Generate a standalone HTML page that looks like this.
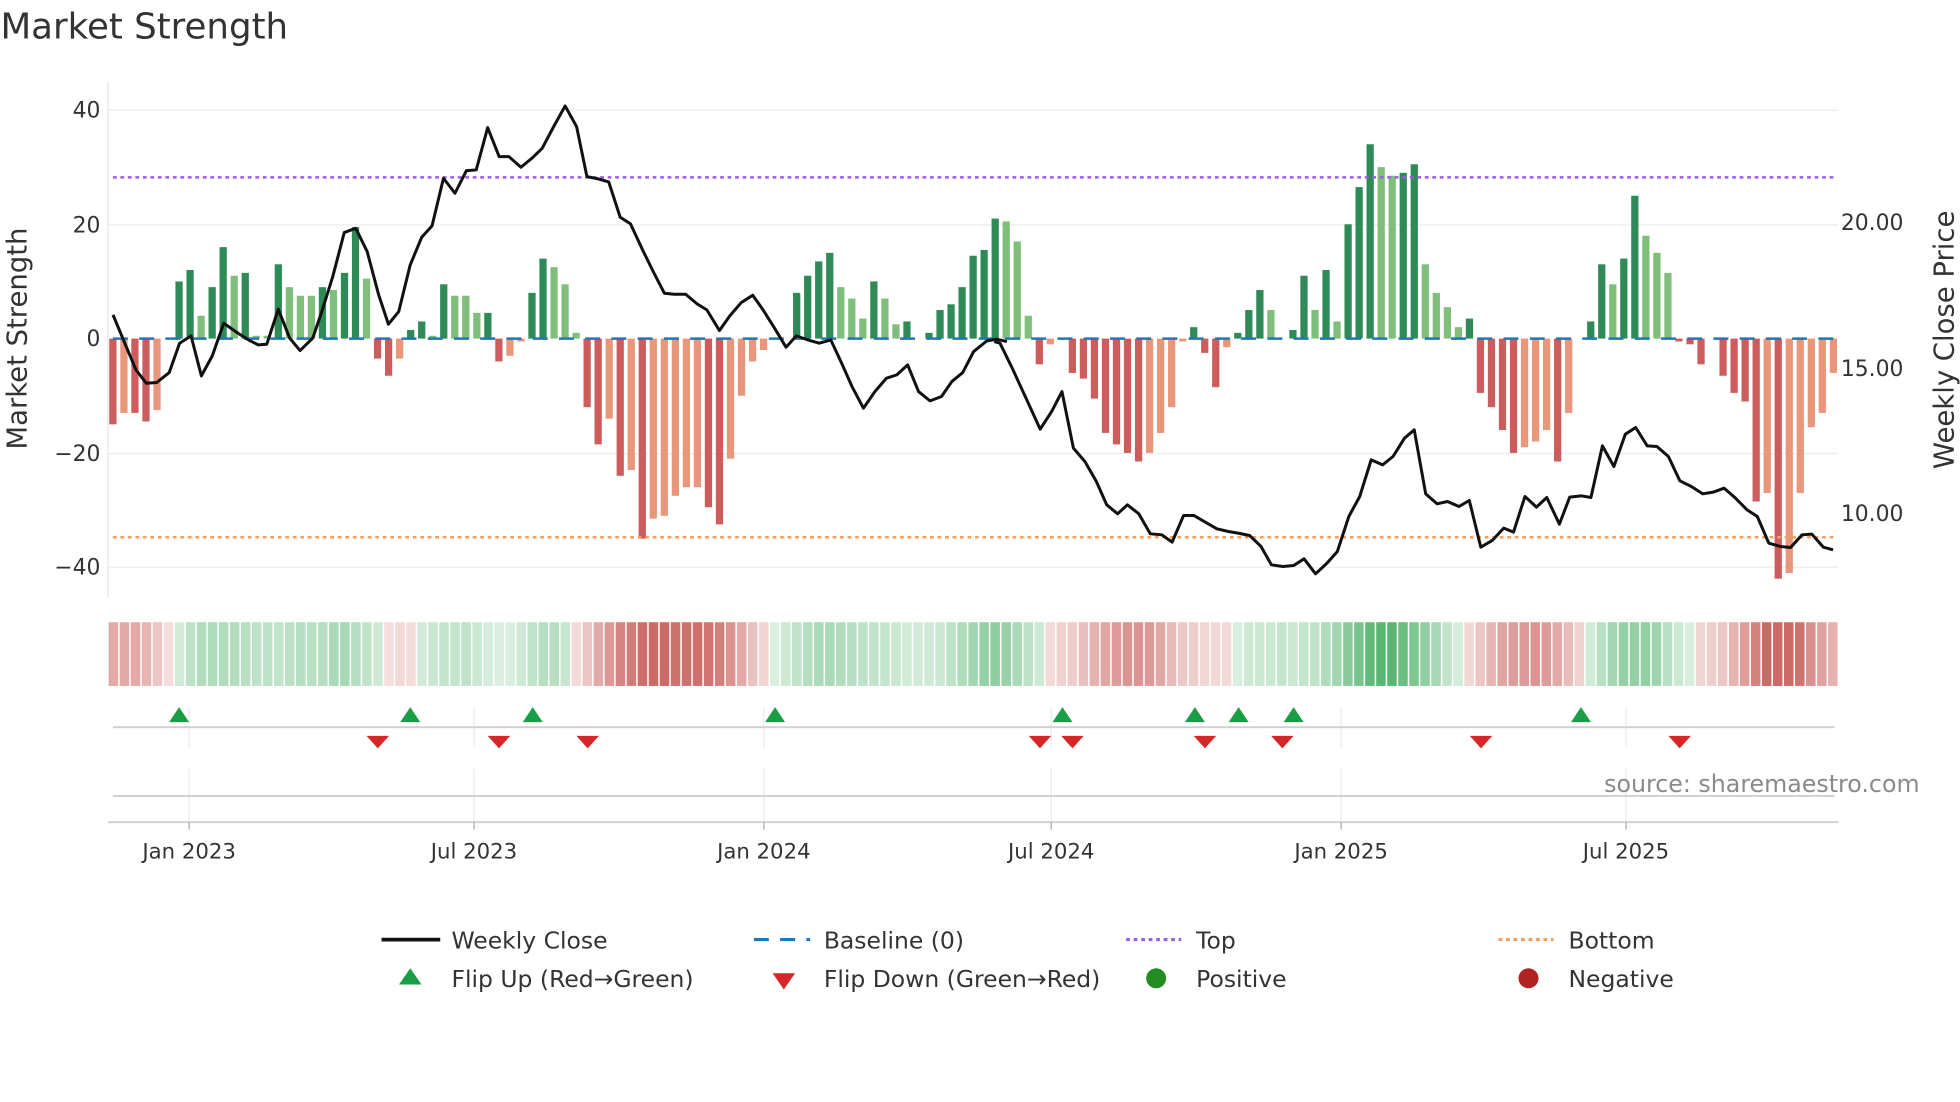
<!DOCTYPE html>
<html><head><meta charset="utf-8"><style>
html,body{margin:0;padding:0;background:#fff;width:1960px;height:1102px;overflow:hidden}
svg{display:block}
text{font-family:"DejaVu Sans","Liberation Sans",sans-serif;fill:#333}
</style></head><body>
<svg id="s" width="1960" height="1102" viewBox="0 0 1568 882" xmlns="http://www.w3.org/2000/svg">
<rect width="1568" height="882" fill="#fff"/>
<text x="0" y="31" font-size="28.5">Market Strength</text>
<g stroke="#ececf2" stroke-width="1">
<line x1="86" y1="88" x2="1471" y2="88"/><line x1="86" y1="180" x2="1471" y2="180"/>
<line x1="86" y1="363" x2="1471" y2="363"/><line x1="86" y1="454" x2="1471" y2="454"/>
</g>
<line x1="86" y1="65" x2="86" y2="478" stroke="#e6e6e6"/>
<g font-size="17.5" text-anchor="end">
<text x="80" y="94">40</text><text x="80" y="186">20</text><text x="80" y="277">0</text>
<text x="80" y="369">−20</text><text x="80" y="460">−40</text>
</g>
<g font-size="17.5">
<text x="1473" y="184">20.00</text><text x="1473" y="301">15.00</text><text x="1473" y="417">10.00</text>
</g>
<text transform="translate(21,271) rotate(-90)" font-size="22" text-anchor="middle">Market Strength</text>
<text transform="translate(1563,272) rotate(-90)" font-size="22" text-anchor="middle">Weekly Close Price</text>
<g id="bars"></g>
<line x1="90" y1="271" x2="1468" y2="271" stroke="#1f77b4" stroke-width="2" stroke-dasharray="12,9"/>
<line x1="90" y1="142" x2="1468" y2="142" stroke="#9b5fe0" stroke-width="2" stroke-dasharray="3,3"/>
<line x1="90" y1="430" x2="1468" y2="430" stroke="#f0a060" stroke-width="2" stroke-dasharray="3,3"/>
<polyline transform="translate(80,64) scale(0.4592,0.2667)" vector-effect="non-scaling-stroke" fill="none" stroke="#111" stroke-width="3" stroke-linejoin="round" points="22,705 45,800 62,870 80,910 98,908 120,878 138,790 158,768 176,888 195,828 215,730 240,760 258,780 275,795 290,793 310,688 330,775 348,812 370,775 385,700 405,590 425,458 445,445 465,515 485,645 502,733 520,695 540,555 560,472 578,438 598,295 618,340 638,272 655,270 675,143 695,230 712,230 733,262 752,235 770,205 790,140 810,78 830,140 848,290 868,297 886,306 906,412 924,432 945,510 965,580 983,640 1000,643 1020,643 1040,672 1057,690 1079,752 1097,708 1117,668 1137,646 1155,690 1175,745 1195,802 1213,768 1233,780 1253,790 1273,780 1292,850 1310,920 1330,985 1350,935 1370,895 1388,885 1407,855 1426,935 1446,963 1466,950 1484,905 1503,878 1522,815 1545,783 1562,778 1580,785"/>
<polyline transform="translate(800,64) scale(0.4592,0.2667)" vector-effect="non-scaling-stroke" fill="none" stroke="#111" stroke-width="3" stroke-linejoin="round" points="-10,785 0,790 20,860 48,965 70,1048 90,995 108,935 128,1105 148,1145 168,1205 186,1275 205,1302 222,1275 242,1302 262,1362 282,1365 300,1387 320,1307 338,1307 358,1327 378,1347 398,1355 415,1360 435,1367 455,1400 473,1455 493,1460 512,1457 530,1437 550,1482 570,1450 588,1415 608,1310 627,1250 647,1140 667,1155 685,1130 705,1075 722,1050 742,1242 762,1272 780,1265 800,1280 818,1262 838,1402 858,1382 878,1345 895,1357 915,1250 935,1282 953,1253 975,1333 993,1252 1013,1248 1030,1253 1050,1098 1070,1160 1090,1063 1108,1043 1128,1098 1145,1100 1165,1130 1185,1203 1205,1220 1225,1242 1243,1237 1262,1225 1282,1255 1302,1290 1320,1310 1340,1390 1360,1400 1378,1403 1398,1365 1415,1363 1435,1402 1452,1410"/>
<g id="strip"></g>
<g stroke="#e8eaee" stroke-width="1">
<line x1="151" y1="566" x2="151" y2="598"/><line x1="379" y1="566" x2="379" y2="598"/><line x1="611" y1="566" x2="611" y2="598"/><line x1="841" y1="566" x2="841" y2="598"/><line x1="1073" y1="566" x2="1073" y2="598"/><line x1="1301" y1="566" x2="1301" y2="598"/>
<line x1="151" y1="615" x2="151" y2="658"/><line x1="379" y1="615" x2="379" y2="658"/><line x1="611" y1="615" x2="611" y2="658"/><line x1="841" y1="615" x2="841" y2="658"/><line x1="1073" y1="615" x2="1073" y2="658"/><line x1="1301" y1="615" x2="1301" y2="658"/>
</g>
<line x1="90" y1="582" x2="1468" y2="582" stroke="#cfcfd4" stroke-width="1.5"/>
<line x1="90" y1="637" x2="1468" y2="637" stroke="#cfcfd4" stroke-width="1.5"/>
<line x1="86" y1="658" x2="1471" y2="658" stroke="#cfcfd4" stroke-width="1.5"/>
<g stroke="#aaa"><line x1="151" y1="658" x2="151" y2="664"/><line x1="379" y1="658" x2="379" y2="664"/><line x1="611" y1="658" x2="611" y2="664"/><line x1="841" y1="658" x2="841" y2="664"/><line x1="1073" y1="658" x2="1073" y2="664"/><line x1="1301" y1="658" x2="1301" y2="664"/></g>
<g id="mk"></g>
<text x="1536" y="634" font-size="19" style="fill:#8a8a8a" text-anchor="end">source: sharemaestro.com</text>
<g font-size="17" text-anchor="middle">
<text x="151" y="687">Jan 2023</text><text x="379" y="687">Jul 2023</text><text x="611" y="687">Jan 2024</text><text x="841" y="687">Jul 2024</text><text x="1073" y="687">Jan 2025</text><text x="1301" y="687">Jul 2025</text>
</g>
<g font-size="18.8">
<line x1="305" y1="752" x2="352" y2="752" stroke="#111" stroke-width="3"/><text x="361" y="759">Weekly Close</text>
<line x1="603" y1="752" x2="648" y2="752" stroke="#1f77b4" stroke-width="2.5" stroke-dasharray="12,9"/><text x="659" y="759">Baseline (0)</text>
<line x1="901" y1="752" x2="945" y2="752" stroke="#9b5fe0" stroke-width="2.5" stroke-dasharray="3,3"/><text x="957" y="759">Top</text>
<line x1="1199" y1="752" x2="1243" y2="752" stroke="#f0a060" stroke-width="2.5" stroke-dasharray="3,3"/><text x="1255" y="759">Bottom</text>
<polygon points="328,775 319,788 337,788" fill="#1a9e45"/><text x="361" y="790">Flip Up (Red→Green)</text>
<polygon points="618,779 636,779 627,792" fill="#d62728"/><text x="659" y="790">Flip Down (Green→Red)</text>
<circle cx="925" cy="783" r="8" fill="#228b22"/><text x="957" y="790">Positive</text>
<circle cx="1223" cy="783" r="8" fill="#b22222"/><text x="1255" y="790">Negative</text>
</g>
</svg>
<script>
var v=[[-15,1],[-13,0],[-13,1],[-14.5,1],[-12.5,0],[0,0],[10,1],[12,1],[4,0],[9,1],[16,1],[11,0],[11.5,1],[0.5,0],[0.5,0],[13,1],[9,0],[7.5,0],[7.5,0],[9,1],[8.5,0],[11.5,1],[19.5,1],[10.5,0],[-3.5,1],[-6.5,1],[-3.5,0],[1.5,1],[3,1],[0.5,0],[9.5,1],[7.5,0],[7.5,0],[4.5,0],[4.5,1],[-4,1],[-3,0],[-0.5,0],[8,1],[14,1],[12.5,0],[9.5,0],[1,0],[-12,1],[-18.5,1],[-14,0],[-24,1],[-23,0],[-35,1],[-31.5,0],[-31,0],[-27.5,0],[-26,0],[-26,0],[-29.5,1],[-32.5,1],[-21,0],[-10,0],[-4,0],[-2,0],[0,0],[0,0],[8,1],[11,1],[13.5,1],[15,1],[9,0],[7,0],[3.5,0],[10,1],[7,0],[2.5,0],[3,1],[0,0],[1,1],[5,1],[6,1],[9,1],[14.5,1],[15.5,1],[21,1],[20.5,0],[17,0],[4,0],[-4.5,1],[-1,0],[0,0],[-6,1],[-7,1],[-10.5,1],[-16.5,1],[-18.5,1],[-20,1],[-21.5,1],[-20,0],[-16.5,0],[-12,0],[-0.5,0],[2,1],[-2.5,1],[-8.5,1],[-1.5,0],[1,1],[5,1],[8.5,1],[5,0],[0,0],[1.5,1],[11,1],[5,0],[12,1],[3,0],[20,1],[26.5,1],[34,1],[30,0],[28.5,0],[29,1],[30.5,1],[13,0],[8,0],[5.5,0],[2,0],[3.5,1],[-9.5,1],[-12,1],[-16,1],[-20,1],[-19,0],[-18,0],[-16,0],[-21.5,1],[-13,0],[0,0],[3,1],[13,1],[9.5,0],[14,1],[25,1],[18,0],[15,0],[11.5,0],[-0.5,1],[-1,1],[-4.5,1],[0,0],[-6.5,1],[-9.5,1],[-11,1],[-28.5,1],[-27,0],[-42,1],[-41,0],[-27,0],[-15.5,0],[-13,0],[-6,0]];
var NS="http://www.w3.org/2000/svg",n=v.length,sp=(1467-90)/(n-1),b=document.getElementById('bars'),st=document.getElementById('strip');
function R(p,x,y,w,h,f){var r=document.createElementNS(NS,'rect');r.setAttribute('x',x);r.setAttribute('y',y);r.setAttribute('width',w);r.setAttribute('height',h);r.setAttribute('fill',f);p.appendChild(r);}
var sw=(1471-86)/n;
for(var i=0;i<n;i++){var x=90+i*sp,val=v[i][0],d=v[i][1],h=Math.abs(val)*4.575;
 if(h>0.3){var c=val>0?(d?'#2e8b57':'#7fbf7b'):(d?'#cd5c5c':'#e9967a');R(b,x-2.9,val>0?271-h:271,5.8,h,c);}
 var s=0,k=0;for(var j=i-2;j<=i+2;j++){if(j>=0&&j<n){s+=v[j][0];k++;}}s/=k;
 var t=Math.min(1,Math.abs(s)/30)*0.75+0.2,col;
 if(s>=0){col='rgba(60,170,90,'+(t*0.9).toFixed(2)+')';}else{col='rgba(195,80,75,'+(t*0.9).toFixed(2)+')';}
 R(st,86+i*sw+0.6,498,sw-1.2,51,col);}
var m=document.getElementById('mk');
[143,328,426,620,850,956,991,1035,1265].forEach(function(x){var p=document.createElementNS(NS,'polygon');p.setAttribute('points',(x)+',566 '+(x-8)+',578 '+(x+8)+',578');p.setAttribute('fill','#1a9e45');m.appendChild(p);});
[302,399,470,832,858,964,1026,1185,1344].forEach(function(x){var p=document.createElementNS(NS,'polygon');p.setAttribute('points',(x-9)+',589 '+(x+9)+',589 '+x+',599');p.setAttribute('fill','#d62728');m.appendChild(p);});
</script>
</body></html>
